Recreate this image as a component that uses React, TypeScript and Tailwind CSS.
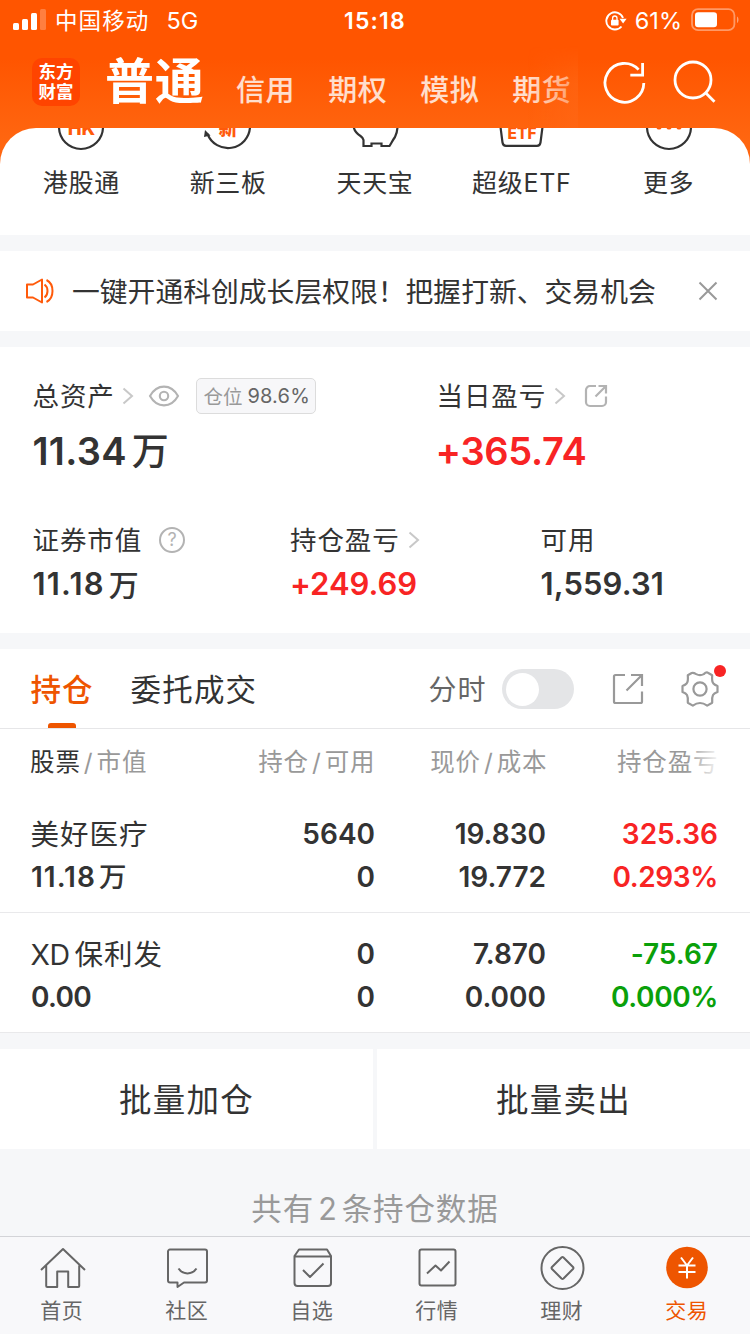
import type { ReactNode } from "react";

function SignalBars() {
  return (
    <svg width="34" height="22" viewBox="0 0 34 22" fill="#fff">
      <rect x="0" y="14" width="6" height="7" rx="1.5" />
      <rect x="9" y="10" width="6" height="11" rx="1.5" />
      <rect x="18" y="4" width="6" height="17" rx="1.5" />
      <rect x="27" y="0" width="6" height="21" rx="1.5" opacity="0.25" />
    </svg>
  );
}

function RotationLock() {
  return (
    <svg width="22" height="20" viewBox="0 0 22 20" fill="none">
      <path d="M18 7A8.600 8.600 0 1 0 16.500 15.500" stroke="#fff" strokeWidth="1.9" />
      <path d="M14.600 7.800h7l-3.500 4.600z" fill="#fff" />
      <rect x="6" y="8.8" width="7.6" height="5.6" rx="0.9" fill="#fff" />
      <path d="M7.600 9V7.200a2.200 2.200 0 0 1 4.400 0V9" stroke="#fff" strokeWidth="1.3" />
    </svg>
  );
}

function Battery() {
  return (
    <svg width="48" height="24" viewBox="0 0 48 24" fill="none">
      <rect x="1" y="1.200" width="42.4" height="21" rx="6" stroke="#fff" strokeOpacity="0.4" strokeWidth="1.8" />
      <rect x="4" y="4.200" width="22" height="15" rx="3.2" fill="#fff" />
      <path d="M46 8.5c2 .8 2 5.700 0 6.500z" fill="#fff" fillOpacity="0.45" />
    </svg>
  );
}

function StatusBar() {
  return (
    <div className="flex h-[42px] items-center pr-[11px] pl-[13px] text-white">
      <div className="flex w-[331px] items-center">
        <div className="-mt-[3px]">
          <SignalBars />
        </div>
        <span className="ml-[8px] text-[22.500px] leading-[42px] tracking-[1.100px]">中国移动</span>
        <span className="ml-[17px] text-[23.500px] leading-[42px]">5G</span>
      </div>
      <span className="text-[23px] leading-[42px] font-semibold tracking-[1.200px]">15:18</span>
      <div className="ml-auto flex items-center">
        <RotationLock />
        <span className="ml-[8px] text-[23.500px] leading-[42px] whitespace-nowrap">61%</span>
        <div className="-mt-[2px] ml-[9px]">
          <Battery />
        </div>
      </div>
    </div>
  );
}

function NavBar() {
  return (
    <div className="flex h-[86px] pl-[32px]">
      <div className="mt-[16px] flex size-[48px] flex-col items-center justify-center rounded-[10px] bg-[#ff4400] text-[17.500px] leading-[20px] font-bold text-white">
        <span>东方</span>
        <span>财富</span>
      </div>
      <div className="relative flex w-[498px] overflow-hidden pl-[25px]">
        <span className="text-[49px] leading-[80px] font-bold tracking-[0.800px] whitespace-nowrap text-white">普通</span>
        <div className="ml-[31.500px] flex gap-[33px] pt-[1px] text-[29px] leading-[95px] font-medium tracking-[0.500px] whitespace-nowrap text-white/80">
          <span>信用</span>
          <span>期权</span>
          <span>模拟</span>
          <span>期货</span>
        </div>
        <div className="absolute inset-y-0 right-0 w-[50px] bg-linear-to-r from-[#ff610f]/0 to-[#ff6716]/60 mask-linear-[180deg,transparent_5%,black_50%] mask-t-from-50% mask-t-to-95%" />
      </div>
      <svg className="mt-[18px] ml-[25px]" width="44" height="44" viewBox="0 0 44 44" fill="none" stroke="#fff" strokeWidth="2.8">
        <path d="M35.600 9.600A19.400 19.400 0 1 0 40.800 23" />
        <path d="M39.600 3v12.200H27.300" />
      </svg>
      <svg className="mt-[18px] ml-[26px]" width="44" height="44" viewBox="0 0 44 44" fill="none" stroke="#fff" strokeWidth="2.800">
        <circle cx="20" cy="20" r="18" />
        <path d="M32.300 32.500l9.200 9.200" />
      </svg>
    </div>
  );
}

function Shortcut({ label, children }: { label: string; children: ReactNode }) {
  return (
    <div className="flex flex-1 flex-col items-center">
      <svg width="60" height="24" viewBox="0 0 60 24" fill="none" stroke="#333" strokeWidth="2.2">
        {children}
      </svg>
      <span className="mt-[14.500px] text-[25px] leading-[32px] tracking-[0.700px] whitespace-nowrap text-[#333]">{label}</span>
    </div>
  );
}

const glyph = { fill: "#ff5a0a", stroke: "none", textAnchor: "middle" as const, fontWeight: 800 };

function Shortcuts() {
  return (
    <div className="flex h-[107px] rounded-t-[36px] bg-white px-[8px]">
      <Shortcut label="港股通">
        <circle cx="30" cy="-1" r="22" />
        <text x="30.500" y="7" fontSize="18.500" {...glyph}>HK</text>
      </Shortcut>
      <Shortcut label="新三板">
        <path d="M9.500 6A22 22 0 0 0 52 -1" />
        <path d="M7 2l-1 7 6.500-1.500z" fill="#333" stroke="none" />
        <text x="30" y="7" fontSize="19" {...glyph}>新</text>
      </Shortcut>
      <Shortcut label="天天宝">
        <path d="M8.500 -2c.5 4 3 7.500 7 10 1.500 1 2.500 2 3 4v6h8v-2.500h10V18h8c2-3 3-5.500 5.500-9 1.500-3 2.500-6 2.500-11" />
      </Shortcut>
      <Shortcut label="超级ETF">
        <path d="M8.500 -1l2 15.500c.3 2 1.300 3.300 3.500 3.300h31c2.200 0 3.200-1.300 3.500-3.300L50.500 -1" />
        <text x="30" y="10.800" fontSize="15.500" {...glyph}>ETF</text>
      </Shortcut>
      <Shortcut label="更多">
        <circle cx="30" cy="-1" r="22" />
        <g fill="#ff5a0a" stroke="none">
          <circle cx="20" cy="-1" r="2.600" />
          <circle cx="30" cy="-1" r="2.600" />
          <circle cx="40" cy="-1" r="2.600" />
        </g>
      </Shortcut>
    </div>
  );
}

function Notice() {
  return (
    <div className="flex h-[80px] items-center bg-white">
      <svg className="ml-[25px]" width="30" height="26" viewBox="0 0 30 26" fill="none" stroke="#ff5a0a" strokeWidth="2" strokeLinejoin="round">
        <path d="M2 6.500h6L17 1.500v23l-9-5H2z" />
        <path d="M19.500 6.500c4 3 4 10 0 13M21.500 2c8 4 8 18 0 22" />
      </svg>
      <span className="ml-[17px] w-[610px] pt-[2px] text-[27.800px] leading-[80px] whitespace-nowrap text-[#333]">
        一键开通科创成长层权限！把握打新、交易机会
      </span>
      <svg className="ml-[16px]" width="20" height="20" viewBox="0 0 20 20" stroke="#999" strokeWidth="2">
        <path d="M1.500 1.500l17 17M18.500 1.500l-17 17" />
      </svg>
    </div>
  );
}

function Chevron() {
  return (
    <svg width="12" height="18" viewBox="0 0 12 18" fill="none" stroke="#c8c8c8" strokeWidth="2">
      <path d="M1.500 1.500L10 9l-8.500 7.500" />
    </svg>
  );
}

const labelText = "text-[26.500px] leading-[36px] tracking-[0.900px] whitespace-nowrap text-[#333]";

function Assets() {
  return (
    <div className="h-[286px] bg-white pt-[31px]">
      <div className="flex">
        <div className="w-[404px] pl-[32.500px]">
          <div className="flex h-[36px] items-center">
            <span className={labelText}>总资产</span>
            <div className="ml-[7px]">
              <Chevron />
            </div>
            <svg className="ml-[14px]" width="32" height="22" viewBox="0 0 32 22" fill="none" stroke="#b3b3b3" strokeWidth="2.100">
              <path d="M2 11C9-1.500 23-1.500 30 11 23 23.500 9 23.500 2 11z" />
              <circle cx="16" cy="11" r="4.200" />
            </svg>
            <div className="ml-[16px] flex h-[36px] w-[120px] items-center justify-center rounded-[5px] border border-[#dcdcdc] bg-[#f7f7f9] pl-[2px] text-[19.500px] leading-[34px] whitespace-nowrap">
              <span className="pt-[1px] text-[#999]">仓位</span>
              <span className="ml-[5px] text-[20px] tracking-[0.200px] text-[#666]">98.6%</span>
            </div>
          </div>
          <div className="mt-[13px] flex text-[38px] leading-[48px] font-semibold whitespace-nowrap text-[#333]">
            <span className="tracking-[0.300px]">11.34</span>
            <span className="ml-[5px] pt-[1px] text-[37px] font-medium">万</span>
          </div>
        </div>
        <div className="flex-1 pl-[32.500px]">
          <div className="flex h-[36px] items-center">
            <span className={labelText}>当日盈亏</span>
            <div className="ml-[8px]">
              <Chevron />
            </div>
            <svg className="ml-[18px]" width="24" height="24" viewBox="0 0 24 24" fill="none" stroke="#b3b3b3" strokeWidth="2.200">
              <path d="M12 2H6a4 4 0 0 0-4 4v12a4 4 0 0 0 4 4h12a4 4 0 0 0 4-4v-5.500" />
              <path d="M14.500 2H22v7.500M22 2L11.500 12.500" />
            </svg>
          </div>
          <div className="mt-[13px] -ml-[1px] text-[38px] leading-[48px] font-semibold tracking-[-0.300px] text-[#f82424]">+365.74</div>
        </div>
      </div>
      <div className="mt-[46px] flex">
        <div className="w-[257px] pl-[32.500px]">
          <div className="flex h-[36px] items-center">
            <span className={labelText}>证券市值</span>
            <div className="ml-[17px] flex size-[26px] items-center justify-center rounded-full border-2 border-[#b3b3b3] text-[18px] leading-[22px] text-[#b3b3b3]">
              ?
            </div>
          </div>
          <div className="mt-[8px] flex text-[31px] leading-[36px] font-semibold whitespace-nowrap text-[#333]">
            <span className="tracking-[1.200px]">11.18</span>
            <span className="ml-[4px] pt-[1px] text-[30px] font-medium">万</span>
          </div>
        </div>
        <div className="w-[251px] pl-[33px]">
          <div className="flex h-[36px] items-center">
            <span className={labelText}>持仓盈亏</span>
            <div className="ml-[8px]">
              <Chevron />
            </div>
          </div>
          <div className="mt-[8px] text-[31px] leading-[36px] font-semibold text-[#f82424]">+249.69</div>
        </div>
        <div className="flex-1 pl-[32.500px]">
          <div className="flex h-[36px] items-center">
            <span className={labelText}>可用</span>
          </div>
          <div className="mt-[8px] text-[31px] leading-[36px] font-semibold tracking-[0.100px] text-[#333]">1,559.31</div>
        </div>
      </div>
    </div>
  );
}

function HoldingTabs() {
  return (
    <div className="flex h-[80px] border-b border-[#e6e6e8] bg-white pl-[30px]">
      <div className="flex w-[64px] flex-col items-center">
        <span className="h-[80px] text-[30.500px] leading-[81px] font-medium tracking-[0.900px] whitespace-nowrap text-[#ee5500]">持仓</span>
        <span className="-mt-[6px] h-[5px] w-[28px] rounded-t-[3px] bg-[#ee5500]" />
      </div>
      <span className="ml-[36.500px] w-[298px] text-[30.500px] leading-[81px] tracking-[1.200px] whitespace-nowrap text-[#333]">委托成交</span>
      <div className="flex h-[80px] items-center">
        <span className="w-[73.500px] pt-[2px] text-[28px] leading-[80px] tracking-[1px] text-[#666]">分时</span>
        <div className="flex h-[40px] w-[72px] items-center rounded-full bg-[#e4e5e7] pl-[3.500px]">
          <div className="size-[33px] rounded-full bg-white" />
        </div>
        <svg className="ml-[38px]" width="32" height="32" viewBox="0 0 32 32" fill="none" stroke="#999" strokeWidth="2.200">
          <path d="M13 2H3.500A1.500 1.500 0 0 0 2 3.500v25A1.500 1.500 0 0 0 3.500 30h25a1.500 1.500 0 0 0 1.500-1.500V18.500" />
          <path d="M19 2h11v11M30 2L14.500 17.500" />
        </svg>
        <div className="relative ml-[37px]">
          <svg width="38" height="38" viewBox="0 0 38 38" fill="none" stroke="#999" strokeWidth="2.200">
            <path
              strokeLinejoin="round"
              d="M15.200 4.100Q19 6.100 22.800 4.100Q25.500 1.500 27.300 3L31.200 5.300Q30.700 11.200 32.200 13.200Q33.500 14.800 36.500 16V22Q33 23.300 32 25Q30.700 27.500 31.200 32.700L26.200 35.600Q22.500 33 19 33Q15.500 33 11.800 35.600L6.800 32.700Q7.300 27.500 6 25Q5 23.300 1.500 22V16Q4.500 14.800 5.800 13.200Q7.300 11.200 6.800 5.300L10.700 3Q12.500 2.500 15.200 4.100Z"
            />
            <circle cx="19" cy="19" r="6.600" />
          </svg>
          <span className="absolute -top-[5px] -right-[7px] size-[12px] rounded-full bg-[#f82424]" />
        </div>
      </div>
    </div>
  );
}

function TableHead() {
  return (
    <div className="relative grid h-[64px] grid-cols-[173.500px_172px_172px_171px] pl-[30px] text-[24.500px] leading-[66px] tracking-[0.900px] whitespace-nowrap text-[#999]">
      <span>
        <span className="text-[#333]">股票</span>
        <span className="mr-[3px] ml-[3px]">/</span>市值
      </span>
      <span className="text-right">
        持仓<span className="mx-[3px]">/</span>可用
      </span>
      <span className="text-right">
        现价<span className="mx-[3px]">/</span>成本
      </span>
      <span className="text-right">持仓盈亏</span>
      <div className="absolute top-0 left-[686px] h-[60px] w-[32px] bg-linear-to-r from-white/0 to-white/90" />
    </div>
  );
}

type Holding = {
  name: ReactNode;
  value: ReactNode;
  held: string;
  free: string;
  price: string;
  cost: string;
  profit: string;
  rate: string;
  up: boolean;
};

const holdings: Holding[] = [
  {
    name: "美好医疗",
    value: (
      <>
        <span className="tracking-[1px]">11.18</span>
        <span className="ml-[3px] text-[27.500px] font-medium">万</span>
      </>
    ),
    held: "5640",
    free: "0",
    price: "19.830",
    cost: "19.772",
    profit: "325.36",
    rate: "0.293%",
    up: true,
  },
  {
    name: (
      <>
        <span className="tracking-[-0.500px]">XD</span>
        <span className="ml-[5px]">保利发</span>
      </>
    ),
    value: <span className="tracking-[-0.700px]">0.00</span>,
    held: "0",
    free: "0",
    price: "7.870",
    cost: "0.000",
    profit: "-75.67",
    rate: "0.000%",
    up: false,
  },
];

function HoldingRow({ item }: { item: Holding }) {
  return (
    <div className="grid h-[120px] grid-cols-[172px_172px_171px_172px] border-b border-[#e9e9eb] bg-white pt-[19.500px] pl-[31px] text-[28px] leading-[43px] font-semibold whitespace-nowrap text-[#333]">
      <div>
        <div className="-ml-[0.500px] text-[28.500px] font-normal tracking-[1px]">{item.name}</div>
        <div>{item.value}</div>
      </div>
      <div className="text-right">
        <div>{item.held}</div>
        <div>{item.free}</div>
      </div>
      <div className="text-right">
        <div>{item.price}</div>
        <div>{item.cost}</div>
      </div>
      <div className={item.up ? "text-right text-[#f82424]" : "text-right text-[#0aa00a]"}>
        <div>{item.profit}</div>
        <div className="tracking-[-0.400px]">{item.rate}</div>
      </div>
    </div>
  );
}

function Tab({ label, active, children }: { label: string; active?: boolean; children: ReactNode }) {
  return (
    <div className={active ? "flex flex-1 flex-col items-center text-[#ee5500]" : "flex flex-1 flex-col items-center text-[#666]"}>
      <svg className="mt-[7px]" width="48" height="48" viewBox="0 0 48 48" fill="none" stroke="currentColor" strokeWidth="2" strokeLinejoin="round">
        {children}
      </svg>
      <span className="mt-[3.500px] -ml-[1.500px] text-[21px] leading-[30px] tracking-[0.500px]">{label}</span>
    </div>
  );
}

function TabBar() {
  return (
    <div className="flex h-[98px] border-t border-[#d3d4d8] bg-[#f8f8fa]">
      <Tab label="首页">
        <path d="M2 26L24 5l22 21M7.200 21.500V42a1 1 0 0 0 1 1h10V27.500h11V43h10a1 1 0 0 0 1-1V21.500" />
      </Tab>
      <Tab label="社区">
        <path d="M6 5.500h35a2 2 0 0 1 2 2v29a2 2 0 0 1-2 2H20l-6.500 4.500v-4.500H6a2 2 0 0 1-2-2v-29a2 2 0 0 1 2-2z" />
        <path d="M14.500 24.500c4.500 6.500 13.500 6.500 18 0" />
      </Tab>
      <Tab label="自选">
        <path d="M10 5.500h28l4 6.500v27a3 3 0 0 1-3 3H8.500a3 3 0 0 1-3-3V12zM5.500 12.500h36.500M14 26l7 7 13.500-13.500" />
      </Tab>
      <Tab label="行情">
        <rect x="5.500" y="5.500" width="36" height="36" rx="2" />
        <path d="M13 29.500l8.500-8 5.500 5L35.500 17.500" />
      </Tab>
      <Tab label="理财">
        <circle cx="23.500" cy="24" r="21" />
        <path d="M22.500 13.500a1.500 1.500 0 0 1 2 0l9.500 9.500a1.500 1.500 0 0 1 0 2L24.500 34.500a1.500 1.500 0 0 1-2 0L13 25a1.500 1.500 0 0 1 0-2z" />
      </Tab>
      <Tab label="交易" active>
        <circle cx="23" cy="23.500" r="20.800" fill="currentColor" stroke="none" />
        <path d="M17 13.500l6 8 6-8M23 21.500v13M14.500 21.500h17M14.500 28h17" stroke="#fff" />
      </Tab>
    </div>
  );
}

export default function App() {
  return (
    <div className="flex h-[1334px] w-[750px] flex-col overflow-hidden bg-[#f6f7f9] font-['Inter','Noto_Sans_CJK_SC',sans-serif] [font-feature-settings:'calt'_0]">
      <div className="h-[235px] bg-linear-to-b from-[#ff5500] from-25% to-[#ff6610] to-60%">
        <StatusBar />
        <NavBar />
        <Shortcuts />
      </div>
      <div className="h-[16px]" />
      <Notice />
      <div className="h-[16px]" />
      <Assets />
      <div className="h-[16px]" />
      <HoldingTabs />
      <div className="bg-white">
        <TableHead />
        {holdings.map((item) => (
          <HoldingRow key={item.profit} item={item} />
        ))}
      </div>
      <div className="mt-[16px] flex h-[100px] gap-[4px] text-center text-[32.500px] leading-[104px] tracking-[1.200px] text-[#333]">
        <div className="w-[373px] bg-white">批量加仓</div>
        <div className="flex-1 bg-white">批量卖出</div>
      </div>
      <div className="h-[87px] pt-[30px] text-center text-[30.500px] leading-[60px] tracking-[0.900px] text-[#999]">
        共有<span className="mx-[4px]">2</span>条持仓数据
      </div>
      <TabBar />
    </div>
  );
}
